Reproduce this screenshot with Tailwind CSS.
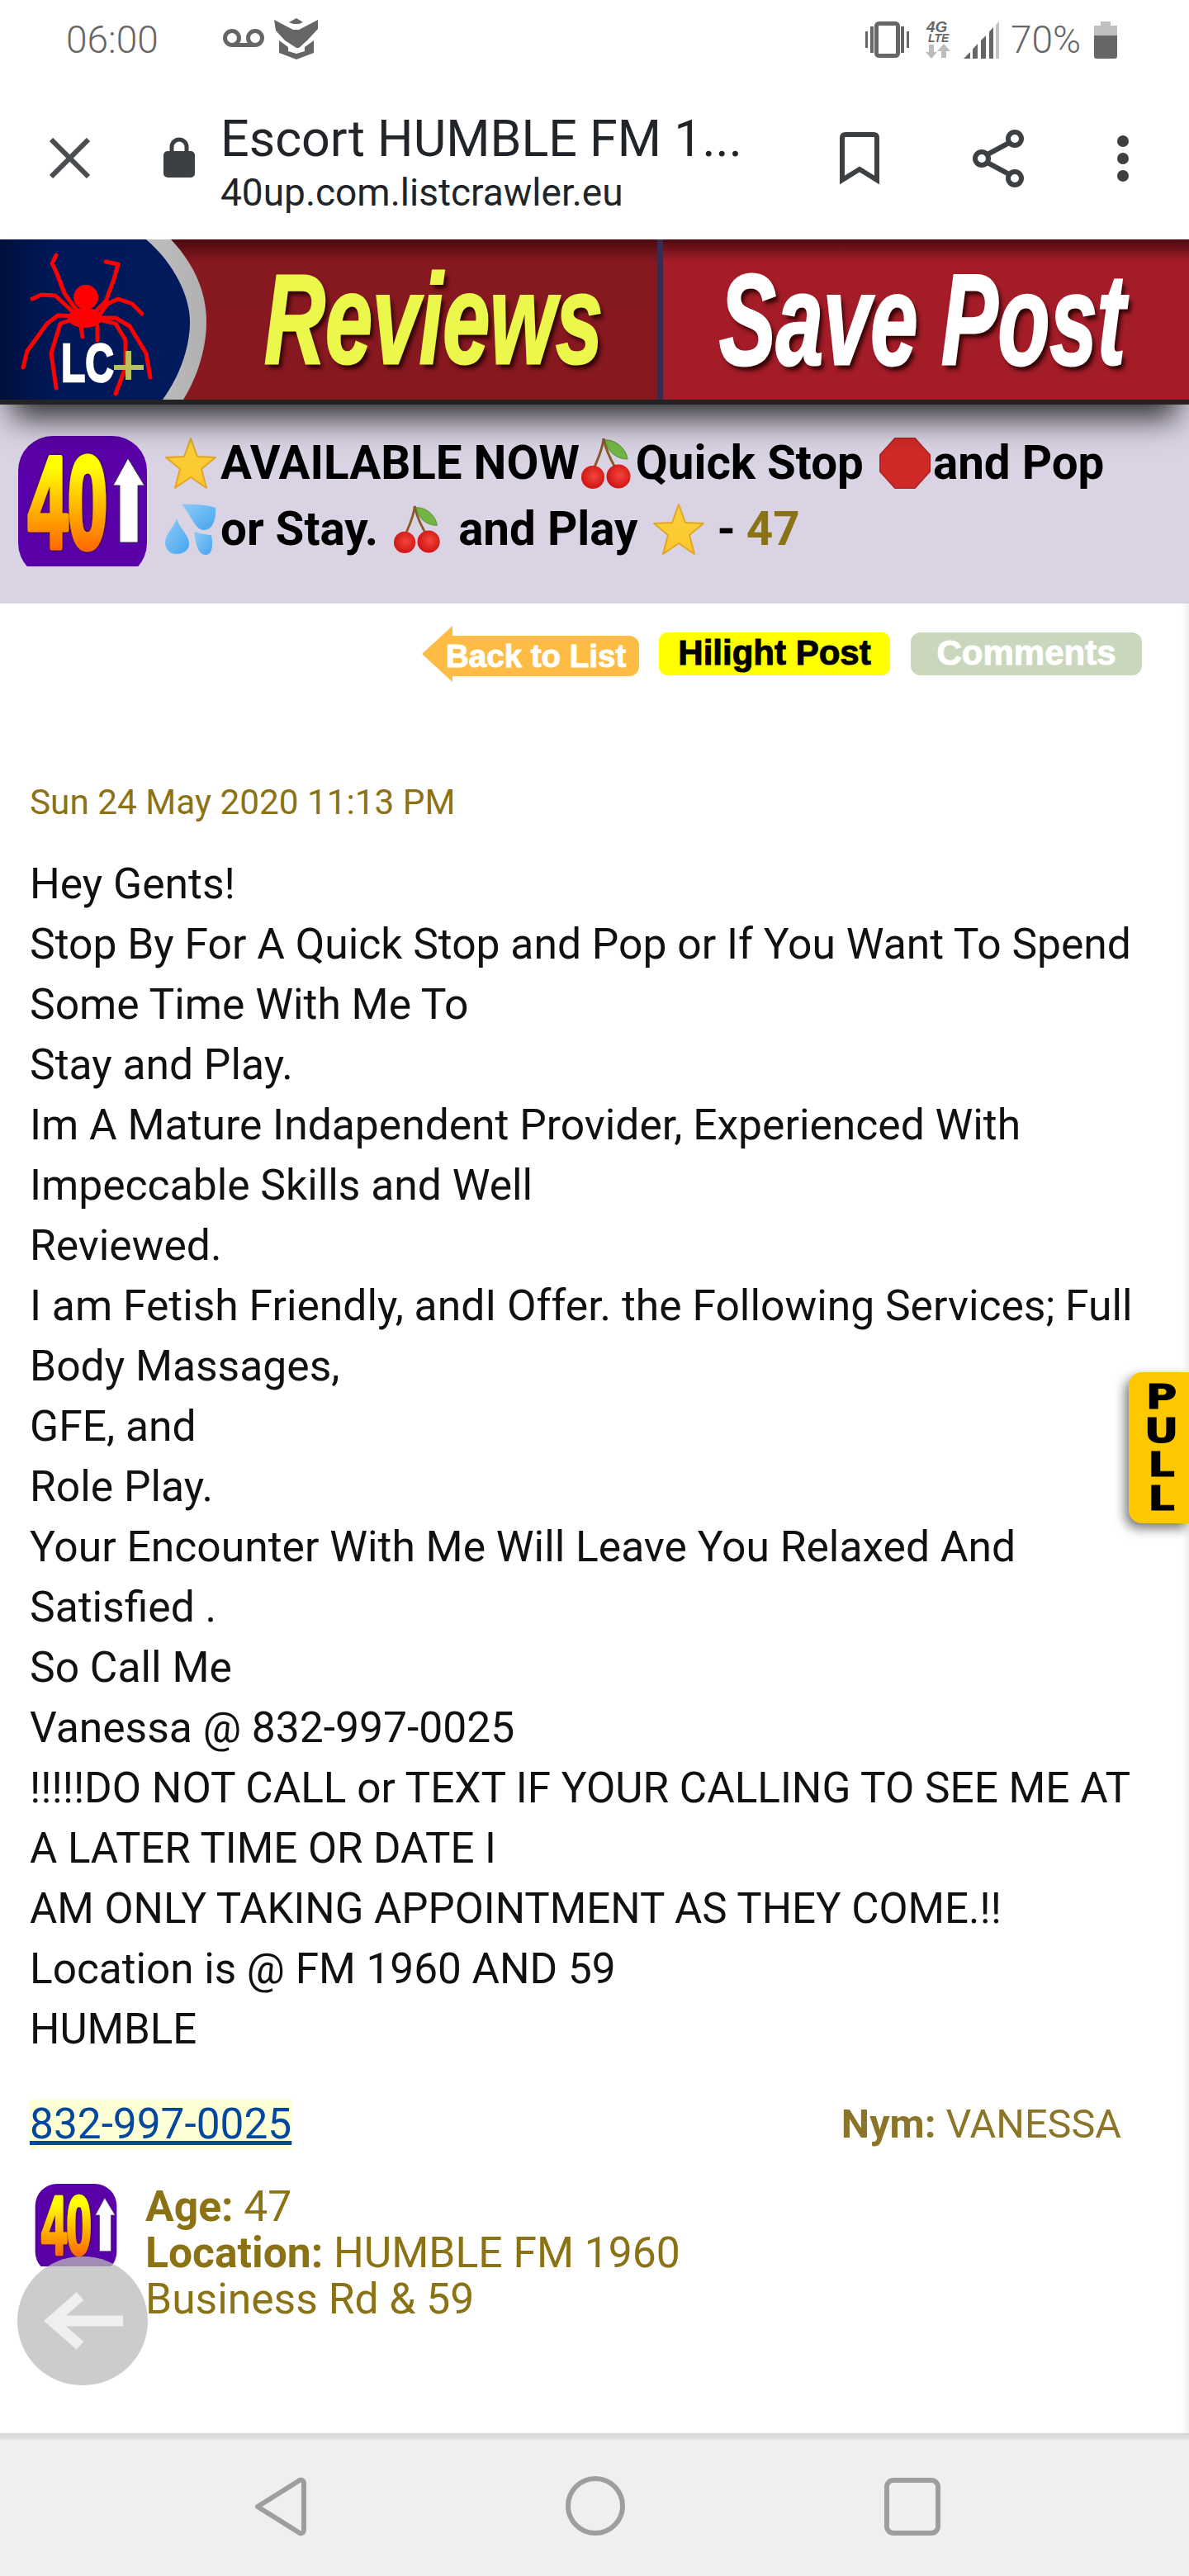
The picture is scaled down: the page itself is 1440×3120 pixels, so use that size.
<!DOCTYPE html>
<html lang="en">
<head>
<meta charset="utf-8">
<title>Escort HUMBLE FM 1960</title>
<script src="https://cdn.jsdelivr.net/npm/@tailwindcss/browser@4"></script>
</head>
<body class="bg-white">
<svg class="absolute w-0 h-0" aria-hidden="true">
  <defs>
    <linearGradient id="g40" x1="0" y1="0" x2="0" y2="1"><stop offset="0.15" stop-color="#ffff00"/><stop offset="1" stop-color="#ff6a00"/></linearGradient>
    <linearGradient id="g40s" gradientUnits="userSpaceOnUse" x1="0" y1="20" x2="0" y2="137"><stop offset="0.15" stop-color="#ffff00"/><stop offset="1" stop-color="#ff6a00"/></linearGradient>
    <filter id="dark40" x="-10%" y="-10%" width="120%" height="120%"><feDropShadow dx="0" dy="0" stdDeviation="1.4" flood-color="#2a1000"/></filter>
    <linearGradient id="gStar" x1="0" y1="0" x2="0" y2="1"><stop offset="0" stop-color="#fbd23a"/><stop offset="1" stop-color="#fdc52e"/></linearGradient>
    <linearGradient id="gDrop" x1="0" y1="0" x2="1" y2="1"><stop offset="0" stop-color="#8ecbf8"/><stop offset="1" stop-color="#45a5ee"/></linearGradient>
    <radialGradient id="gCherry" cx="0.55" cy="0.45" r="0.65"><stop offset="0" stop-color="#f4453c"/><stop offset="1" stop-color="#c80d0d"/></radialGradient>
    <linearGradient id="gNavy" x1="0" y1="0" x2="1" y2="0"><stop offset="0" stop-color="#000f3c"/><stop offset="0.3" stop-color="#00185a"/><stop offset="1" stop-color="#001a5c"/></linearGradient>
    <linearGradient id="gSilver" x1="0" y1="0" x2="1" y2="0"><stop offset="0" stop-color="#8d8d8d"/><stop offset="0.5" stop-color="#c9c9c9"/><stop offset="1" stop-color="#b0b0b0"/></linearGradient>
    <symbol id="star" viewBox="0 0 62 62"><polygon points="31,1 39,23 61,24 44,38 50,61 31,48 12,61 18,38 1,24 23,23" fill="url(#gStar)" stroke="#e0a726" stroke-width="2" stroke-linejoin="round"/></symbol>
    <symbol id="drops" viewBox="0 0 62 62">
      <path d="M20 1 C32 0 50 1 61 5 C62 20 57 32 47 32 C36 32 32 14 20 1Z" fill="url(#gDrop)"/>
      <path d="M14 18 C18 32 30 38 29 50 C28 58 20 61 13 61 C5 61 0 54 0 47 C0 37 10 30 14 18Z" fill="url(#gDrop)"/>
      <path d="M35 34 C42 36 52 38 56 38 C58 48 58 62 49 62 C39 62 37 46 35 34Z" fill="url(#gDrop)"/>
    </symbol>
    <symbol id="cherry" viewBox="0 0 62 62">
      <path d="M27 1 C29 12 34 24 42 38" fill="none" stroke="#8b5a2b" stroke-width="3"/>
      <path d="M27 1 C26 14 20 26 15 38" fill="none" stroke="#8b5a2b" stroke-width="3"/>
      <path d="M29 3 C40 2 54 12 56 26 C46 26 32 20 29 3Z" fill="#72b544" stroke="#4e8f2c" stroke-width="1"/>
      <circle cx="14" cy="48" r="14" fill="url(#gCherry)"/>
      <circle cx="45" cy="47" r="14.5" fill="url(#gCherry)"/>
    </symbol>
    <symbol id="stop" viewBox="0 0 62 62"><polygon points="19,1 43,1 61,21 61,41 43,61 19,61 1,41 1,21" fill="#cf2a27" stroke="#b62525" stroke-width="2"/></symbol>
    <symbol id="logo40" viewBox="0 0 156 158">
      <rect width="156" height="172" rx="42" fill="#5a00a8"/>
      <text x="12" y="135" font-family="'Liberation Sans',sans-serif" font-weight="700" font-size="158" textLength="96" lengthAdjust="spacingAndGlyphs" fill="url(#g40s)" stroke="url(#g40s)" stroke-width="7" stroke-linejoin="round" filter="url(#dark40)">40</text>
      <polygon points="133,27 153,60 145,60 145,129 123,129 123,60 115,60" fill="#fff" stroke="#3a2a50" stroke-width="1"/>
    </symbol>
  </defs>
</svg>

<div class="relative w-[1440px] h-[3120px] flex flex-col overflow-hidden font-['Roboto',sans-serif] text-[#111]">

  <!-- status bar -->
  <div class="h-[96px] shrink-0 flex items-center justify-between pl-[80px] pr-[87px] text-[#666]">
    <div class="flex items-center">
      <span class="text-[46px] leading-none font-light w-[112px]">06:00</span>
      <svg class="ml-[78px] w-[50px] h-[22px] mt-[-4px]" viewBox="0 0 50 22" fill="none" stroke="#666" stroke-width="5"><circle cx="11" cy="11" r="8.5"/><circle cx="39" cy="11" r="8.5"/><path d="M11 19.5H39"/></svg>
      <svg class="ml-[12px] w-[53px] h-[50px] mt-[-2px]" viewBox="0 0 53 50" fill="#666"><polygon points="18,5 27,0 35,5 30,7 23,7"/><polygon points="0,2 23,14 30,14 53,2 53,13 40,27 30,36 27,36 13,27 2,15"/><polygon points="6,27 17,35 17,40 27,43 37,40 37,35 48,27 48,42 27,50 6,42"/></svg>
    </div>
    <div class="flex items-center">
      <svg class="w-[55px] h-[44px]" viewBox="0 0 55 44" fill="#666"><rect x="14.5" y="2.5" width="26" height="39" rx="3" fill="none" stroke="#666" stroke-width="5"/><rect x="1" y="12" width="3" height="20"/><rect x="7" y="6" width="4" height="32"/><rect x="44" y="6" width="4" height="32"/><rect x="51" y="12" width="3" height="20"/></svg>
      <svg class="ml-[19px] w-[32px] h-[46px] overflow-visible" viewBox="0 0 32 46"><text x="1" y="14" font-family="'Liberation Sans',sans-serif" font-weight="700" font-style="italic" font-size="19" fill="#666">4G</text><text x="3" y="26" font-family="'Liberation Sans',sans-serif" font-weight="700" font-style="italic" font-size="14" fill="#666">LTE</text><path d="M4 29H10V38H14L7 46L0 38H4Z" fill="#bdbdbd"/><path d="M19 45H25V37H30L22 28L14 37H19Z" fill="#bdbdbd"/></svg>
      <svg class="ml-[14px] w-[43px] h-[45px]" viewBox="0 0 43 45" fill="#666"><polygon points="0,45 8,45 8,37"/><polygon points="11,45 17,45 17,27 11,33.5"/><polygon points="21,45 27,45 27,17 21,23"/><polygon points="31,45 36,45 36,7 31,12.5"/><polygon points="39,45 43,45 43,0 39,4" fill="#c4c4c4"/></svg>
      <span class="ml-[14px] text-[46px] leading-none font-light w-[88px]">70%</span>
      <svg class="ml-[13px] w-[28px] h-[45px]" viewBox="0 0 28 45"><path d="M8 0H20V5H28V17H0V5H8Z" fill="#c0c0c0"/><path d="M0 17H28V42Q28 45 25 45H3Q0 45 0 42Z" fill="#666"/></svg>
    </div>
  </div>

  <!-- browser toolbar -->
  <div class="h-[194px] shrink-0 flex items-start relative">
    <svg class="ml-[60px] mt-[71px] w-[49px] h-[49px]" viewBox="0 0 49 49" fill="none" stroke="#4a4d50" stroke-width="6"><path d="M2 2L47 47M47 2L2 47"/></svg>
    <svg class="ml-[89px] mt-[70px] w-[38px] h-[49px]" viewBox="0 0 38 49"><path d="M10 20V12A9 9 0 0 1 28 12V20" fill="none" stroke="#3c4043" stroke-width="5"/><rect y="17" width="38" height="32" rx="5" fill="#3c4043"/></svg>
    <div class="ml-[31px] mt-[35px] w-[700px] flex flex-col text-[#212529]">
      <span class="text-[61px] leading-[74px] whitespace-nowrap">Escort HUMBLE FM 1...</span>
      <span class="text-[46px] leading-[56px] whitespace-nowrap">40up.com.listcrawler.eu</span>
    </div>
    <svg class="absolute left-[1017px] top-[64px] w-[48px] h-[63px]" viewBox="0 0 48 63" fill="none" stroke="#3c4043" stroke-width="6"><path d="M3 58V7Q3 3 7 3H41Q45 3 45 7V58L24 45Z"/></svg>
    <svg class="absolute left-[1178px] top-[61px] w-[62px] h-[70px]" viewBox="0 0 62 70" fill="none" stroke="#3c4043" stroke-width="6"><circle cx="51" cy="11" r="8"/><circle cx="51" cy="59" r="8"/><circle cx="11" cy="35" r="8"/><path d="M18 30L44 16M18 40L44 54"/></svg>
    <svg class="absolute left-[1352px] top-[67px] w-[16px] h-[58px]" viewBox="0 0 16 58" fill="#3c4043"><circle cx="8" cy="8" r="7"/><circle cx="8" cy="29" r="7"/><circle cx="8" cy="50" r="7"/></svg>
  </div>

  <!-- banner -->
  <div class="h-[200px] shrink-0 flex flex-col relative z-10 shadow-[0_30px_36px_-14px_rgba(0,0,0,0.8)]">
    <div class="h-[194px] flex">
      <div class="w-[796px] flex items-center bg-[linear-gradient(180deg,#4a0a10_0,#86181f_28px,#87181f_100%)]">
        <svg class="w-[260px] h-[194px] shrink-0" viewBox="0 0 260 194">
          <path d="M207 0C240 35 250 70 250 100C250 130 240 165 222 194H0V0Z" fill="url(#gSilver)"/>
          <path d="M177 0C212 30 230 70 230 100C230 130 218 165 197 194H0V0Z" fill="url(#gNavy)"/>
          <g fill="none" stroke="#ff0000" stroke-width="5" stroke-linecap="round" stroke-linejoin="round">
            <path d="M68 19L63 29L68 39L78 65L90 82L100 92"/>
            <path d="M128 27L143 30L138 48L128 75L115 88"/>
            <path d="M39 72L50 67L67 68L80 80L93 92"/>
            <path d="M172 90L160 78L143 72L130 78L120 92"/>
            <path d="M28 155L33 135L57 102L70 92L93 93"/>
            <path d="M182 167L177 138L157 105L140 95L117 95"/>
            <path d="M68 180L62 138L73 102L93 95"/>
            <path d="M140 187L152 155L152 122L140 102L120 97"/>
            <path d="M98 105L100 118M118 105L118 122"/>
          </g>
          <circle cx="104" cy="70" r="15" fill="#ff0000"/>
          <ellipse cx="103" cy="95" rx="21" ry="12" fill="#ff0000"/>
          <text x="74" y="172" font-family="'Liberation Sans',sans-serif" font-weight="700" font-size="65" textLength="64" lengthAdjust="spacingAndGlyphs" fill="#fff" stroke="#fff" stroke-width="2.5">LC</text>
          <rect x="138" y="152" width="36" height="6" fill="#b9c25a"/><rect x="152" y="135" width="7" height="35" fill="#b9c25a"/>
        </svg>
        <span class="ml-[60px] block w-[410px] shrink-0 origin-left scale-x-[0.665] whitespace-nowrap font-['Liberation_Sans',sans-serif] italic font-bold text-[154px] leading-none text-[#ebf74a] [-webkit-text-stroke:3px_#ebf74a] [text-shadow:6px_6px_6px_rgba(30,0,0,0.85)]">Reviews</span>
      </div>
      <div class="w-[7px] bg-[#3b2a4e]"></div>
      <div class="flex-1 flex items-center pl-[68px] bg-[linear-gradient(180deg,#4a0a10_0,#a31c27_26px,#a31c27_100%)]">
        <span class="block w-[492px] shrink-0 origin-left scale-x-[0.664] whitespace-nowrap font-['Liberation_Sans',sans-serif] italic font-bold text-[155px] leading-none text-white [-webkit-text-stroke:3px_#fff] [text-shadow:6px_6px_6px_rgba(30,0,0,0.85)]">Save Post</span>
      </div>
    </div>
    <div class="h-[6px] bg-[#232323]"></div>
  </div>

  <!-- title band -->
  <div class="h-[241px] shrink-0 bg-[#d9d3e3] flex items-start pl-[22px] pt-[38px]">
    <svg class="w-[156px] h-[158px] shrink-0"><use href="#logo40"/></svg>
    <h1 class="ml-[22px] font-bold text-[56.5px] leading-[80px] text-black whitespace-nowrap -mt-[7px]">
      <div class="flex items-center h-[80px]"><svg class="w-[62px] h-[62px] shrink-0"><use href="#star"/></svg><span class="ml-[5px]">AVAILABLE NOW</span><svg class="ml-[2px] w-[62px] h-[62px] shrink-0"><use href="#cherry"/></svg><span class="ml-[4px]">Quick Stop</span><svg class="ml-[19px] w-[62px] h-[62px] shrink-0"><use href="#stop"/></svg><span class="ml-[3px]">and Pop</span></div>
      <div class="flex items-center h-[80px]"><svg class="w-[62px] h-[62px] shrink-0"><use href="#drops"/></svg><span class="ml-[5px]">or Stay.</span><svg class="ml-[19px] w-[58px] h-[58px] shrink-0"><use href="#cherry"/></svg><span class="ml-[20px]">and Play</span><svg class="ml-[18px] w-[62px] h-[62px] shrink-0"><use href="#star"/></svg><span class="ml-[16px]">-</span><span class="ml-[13px] text-[#8b7315]">47</span></div>
    </h1>
  </div>

  <!-- page body -->
  <div class="flex-1 relative px-[36px] bg-[linear-gradient(90deg,#fff_99.4%,#efefef_100%)]">
    <div class="flex justify-end items-stretch pr-[21px] mt-[35px] h-[52px] font-['Liberation_Sans',sans-serif] font-bold whitespace-nowrap [-webkit-text-stroke:1px]">
      <div class="flex items-center">
        <svg class="w-[37px] h-[68px] shrink-0" viewBox="0 0 37 68"><polygon points="37,0 37,68 0,34" fill="#ffbc45"/></svg>
        <div class="w-[227px] h-[49px] mt-[4px] -ml-[1px] bg-[#ffbc45] rounded-r-[12px] text-white text-[38.5px] leading-[49px] -indent-[7px]">Back to List</div>
      </div>
      <div class="ml-[24px] w-[280px] rounded-[10px] bg-[#ffff00] text-black text-[42px] leading-[50px] text-center">Hilight Post</div>
      <div class="ml-[25px] w-[280px] rounded-[12px] bg-[#c9d8bd] text-white text-[42px] leading-[50px] text-center">Comments</div>
    </div>

    <p class="mt-[130px] text-[42.3px] leading-[48px] text-[#8b7315]">Sun 24 May 2020 11:13 PM</p>

    <p class="mt-[38px] text-[51.6px] leading-[73px] text-[#111] w-[1368px]">Hey Gents!<br>Stop By For A Quick Stop and Pop or If You Want To Spend<br>Some Time With Me To<br>Stay and Play.<br>Im A Mature Indapendent Provider, Experienced With<br>Impeccable Skills and Well<br>Reviewed.<br>I am Fetish Friendly, andI Offer. the Following Services; Full<br>Body Massages,<br>GFE, and<br>Role Play.<br>Your Encounter With Me Will Leave You Relaxed And<br>Satisfied .<br>So Call Me<br>Vanessa @ 832-997-0025<br><span class="text-[51.3px]">!!!!!DO NOT CALL or TEXT IF YOUR CALLING TO SEE ME AT</span><br><span class="text-[51px]">A LATER TIME OR DATE I</span><br><span class="text-[51px]">AM ONLY TAKING APPOINTMENT AS THEY COME.!!</span><br><span class="text-[51.3px]">Location is @ FM 1960 AND 59</span><br><span class="text-[51px]">HUMBLE</span></p>

    <div class="mt-[49px] flex justify-between items-center h-[60px] pr-[46px] text-[48.6px]">
      <a class="block -ml-[1px] px-[1px] text-[51.4px] leading-[60px] text-[#03479f] underline bg-[#ffffd6]" href="#">832-997-0025</a>
      <span class="text-[#8b7529]"><b>Nym:</b> VANESSA</span>
    </div>

    <div class="mt-[42px] flex items-start pl-[4px]">
      <svg class="w-[104px] h-[100px] shrink-0"><use href="#logo40"/></svg>
      <div class="ml-[32px] w-[660px] text-[51.6px] leading-[56px] text-[#8b7315]"><b>Age:</b> 47<br><b>Location:</b> HUMBLE FM 1960<br>Business Rd &amp; 59</div>
    </div>

    <div class="absolute left-[21px] top-[2002px] w-[158px] h-[156px] rounded-full bg-[#bbb]/75 flex items-center justify-center">
      <svg class="w-[158px] h-[156px]" viewBox="0 0 158 156" fill="none" stroke="#efefef" stroke-width="13"><path d="M128 78H46M76 48L42 78L76 108"/></svg>
    </div>

    <div class="absolute left-[1367px] top-[931px] w-[73px] h-[183px] rounded-l-[16px] bg-[#fdc800] shadow-[-4px_6px_14px_rgba(0,0,0,0.55)] pt-[10px] pl-[7px] text-center font-['DejaVu_Sans',sans-serif] font-bold text-[41px] leading-[41px] text-black [-webkit-text-stroke:1px_#000]"><span class="inline-block scale-x-[1.25]">P<br>U<br>L<br>L</span></div>
  </div>

  <!-- nav bar -->
  <div class="h-[173px] shrink-0 bg-[linear-gradient(180deg,#d6d6d6_0,#e4e4e4_8px,#efefef_9px)] flex items-center relative z-10">
    <svg class="absolute left-[306px] top-[53px] w-[66px] h-[72px]" viewBox="0 0 66 72" fill="none" stroke="#9e9e9e" stroke-width="6" stroke-linejoin="round"><path d="M6 36L57 4Q62 3 62 8V64Q62 69 57 68Z"/></svg>
    <svg class="absolute left-[685px] top-[52px] w-[72px] h-[72px]" viewBox="0 0 72 72" fill="none" stroke="#9e9e9e" stroke-width="6"><circle cx="36" cy="36" r="33"/></svg>
    <svg class="absolute left-[1071px] top-[54px] w-[68px] h-[70px]" viewBox="0 0 68 70" fill="none" stroke="#9e9e9e" stroke-width="6"><rect x="3" y="3" width="62" height="64" rx="8"/></svg>
  </div>
</div>
</body>
</html>
